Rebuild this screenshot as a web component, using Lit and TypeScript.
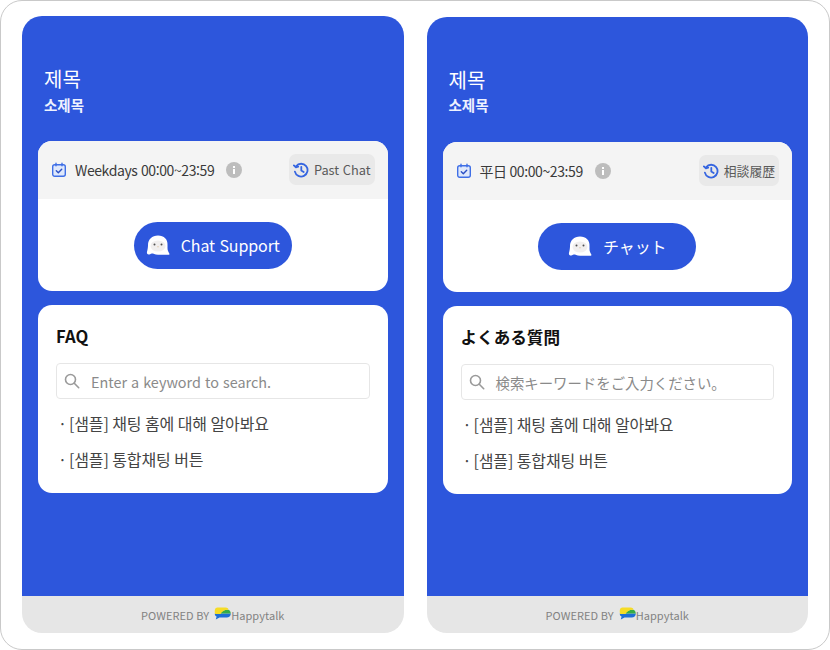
import { LitElement, html, css } from "lit";
import { customElement } from "lit/decorators.js";

const calendar = html`<svg class="cal" viewBox="0 0 16 16" width="16" height="16" fill="none" stroke="#3f6fe6" stroke-width="1.4" stroke-linecap="round" stroke-linejoin="round">
  <rect x="1.7" y="2.7" width="12.6" height="11.6" rx="2" fill="#dfe8fb"/>
  <path d="M5 1.2v2.6M11 1.2v2.6"/>
  <path d="M5.3 8.8l2 1.9 3.4-3.5" stroke="#2a4fc4"/>
</svg>`;
const info = html`<svg class="info" viewBox="0 0 16 16" width="16" height="16">
  <circle cx="8" cy="8" r="8" fill="#bdbdbd"/>
  <rect x="7" y="7" width="2" height="5" fill="#fff"/>
  <rect x="7" y="4" width="2" height="2" fill="#fff"/>
</svg>`;
const history = html`<svg viewBox="0 0 16 16" width="16" height="16" fill="none" stroke="#3565e0" stroke-width="1.8" stroke-linecap="round" stroke-linejoin="round">
  <path d="M3.1 4.2A6.4 6.4 0 1 1 1.9 9.6"/>
  <path d="M.9 3.4l2 1.9 2.3-.6"/>
  <path d="M8.3 4.8v3.6l2.4 1.6"/>
</svg>`;
const ghost = html`<svg viewBox="0 0 24 24" width="24" height="24">
  <path d="M12 2.500C6 2.500 2 6.500 2 12c0 2-.4 5-1 6.800-.5 1.600.6 3 2.200 2.700 1.500-.3 2.800-1.200 4.300-.8 1.500.8 3 1.100 4.500 1.100h10.500c.8 0 1.200-.8.800-1.400-.9-1.300-1.800-3-1.800-5.400V12C22 6.500 18 2.500 12 2.500z" fill="#fff"/>
  <ellipse cx="12" cy="13" rx="7.500" ry="5.500" fill="#f1efef"/>
  <circle cx="8.500" cy="11.500" r="1" fill="#4f4f4f"/>
  <circle cx="15.500" cy="11.500" r="1" fill="#4f4f4f"/>
  <path d="M11 13.500h2l-1 1.100z" fill="#d8b48a"/>
</svg>`;
const search = html`<svg viewBox="0 0 16 16" width="16" height="16" fill="none" stroke="#9a9a9a" stroke-width="1.6" stroke-linecap="round">
  <circle cx="6.500" cy="6.500" r="5"/><path d="M10.300 10.300l4.400 4.400"/>
</svg>`;
const logo = html`<svg class="logo" viewBox="0 0 17 13" width="17" height="13">
  <path d="M16.800 6.500c0 2.500-1.800 3.900-4 3.900H5.500L1.800 12.600l.8-3C1.200 8.800.6 7.600.8 6.500z" fill="#1f6fd6"/>
  <path d="M6 6.500c1.500-2.600 5-4.200 8.200-3.800 1.600.4 2.500 2 2.600 3.800z" fill="#35ad48"/>
  <path d="M3.400.4h8c2.200 0 3.200 1 3 2.300C11 2.300 8 4 6.600 7H1.200C.2 4 .8.400 3.400.4z" fill="#f6dc26"/>
</svg>`;

interface Copy {
  hours: string; past: string; chat: string; faq: string; placeholder: string; lang: string;
}
const EN: Copy = { hours: "Weekdays 00:00~23:59", past: "Past Chat", chat: "Chat Support", faq: "FAQ", placeholder: "Enter a keyword to search.", lang: "ko" };
const JA: Copy = { hours: "平日 00:00~23:59", past: "相談履歴", chat: "チャット", faq: "よくある質問", placeholder: "検索キーワードをご入力ください。", lang: "ja" };

@customElement("app-root")
export class AppRoot extends LitElement {
  static styles = css`
    :host {
      display: block;
      width: 830px;
      height: 650px;
      box-sizing: border-box;
      font-family: "Noto Sans CJK KR", "Noto Sans", sans-serif;
      background: #fff;
    }
    .frame {
      box-sizing: border-box;
      width: 830px;
      height: 650px;
      border: 1px solid #c9c9c9;
      border-radius: 22px;
      padding: 15px 21px 16px 21px;
      display: flex;
      gap: 23px;
      align-items: stretch;
      background: #fff;
    }
    .panel {
      flex: 1 1 0;
      min-width: 0;
      display: flex;
      flex-direction: column;
    }
    .panel.right {
      margin-top: 1px;
    }
    .main {
      flex: 1;
      background: #2d56dc;
      border-radius: 20px 20px 0 0;
      display: flex;
      flex-direction: column;
    }
    .head {
      padding: 48px 16px 0 22px;
      height: 77px;
      color: #fff;
      display: flex;
      flex-direction: column;
    }
    .title {
      font-size: 20px;
      line-height: 30px;
    }
    .sub {
      font-size: 14.5px;
      font-weight: 700;
      line-height: 21px;
      color: #eef2ff;
    }
    .right .sub {
      margin-top: -1px;
    }
    .body {
      flex: 1;
      padding: 0 16px;
      display: flex;
      flex-direction: column;
      gap: 14px;
    }
    .card {
      background: #fff;
      border-radius: 14px;
      overflow: hidden;
    }
    .bar {
      height: 57.5px;
      background: #f4f4f4;
      display: flex;
      align-items: center;
      padding: 0 13px;
      font-size: 14px;
      color: #3a3a3a;
      letter-spacing: -0.4px;
    }
    .cal { margin-right: 8px; }
    .info { margin-left: 12px; }
    .past {
      margin-left: auto;
      height: 31px;
      box-sizing: border-box;
      padding: 0 4px;
      border-radius: 7px;
      background: #e9e9e9;
      display: flex;
      align-items: center;
      gap: 5px;
      font-size: 12.8px;
      color: #5a5a5a;
      letter-spacing: 0;
      white-space: nowrap;
    }
    .action {
      height: 92.5px;
      box-sizing: border-box;
      padding-top: 1px;
      display: flex;
      align-items: center;
      justify-content: center;
    }
    .chat {
      height: 47px;
      width: 158px;
      box-sizing: border-box;
      border-radius: 24px;
      background: #2d56dc;
      color: #fff;
      font-size: 16px;
      letter-spacing: -0.1px;
      display: flex;
      align-items: center;
      justify-content: center;
      gap: 11px;
    }
    .faq {
      height: 188px;
      box-sizing: border-box;
      padding: 18px 18px 0;
    }
    .faq h2 {
      margin: 0;
      font-size: 16.6px;
      line-height: 26px;
      font-weight: 700;
      color: #111;
    }
    .search {
      margin-top: 14px;
      height: 36px;
      box-sizing: border-box;
      border: 1px solid #e6e6e6;
      border-radius: 4px;
      display: flex;
      align-items: center;
      padding-left: 7px;
      gap: 11px;
      font-size: 14.4px;
      color: #8a8a8a;
    }
    .search span { padding-top: 1px; }
    .list {
      margin: 6px 0 0;
      padding: 0 0 0 2px;
      list-style: none;
      font-size: 16px;
      color: #444;
      letter-spacing: -0.1px;
    }
    .list li {
      height: 36px;
      line-height: 36px;
      white-space: nowrap;
    }
    .dot { margin-right: 2px; }
    .foot {
      height: 37px;
      flex: none;
      background: #e6e6e6;
      border-radius: 0 0 20px 20px;
      display: flex;
      align-items: center;
      justify-content: center;
      font-size: 11px;
      letter-spacing: 0.05px;
      color: #828282;
      padding-top: 1px;
      box-sizing: border-box;
    }
    .foot .by { margin-right: 5px; }
    .logo { margin-top: -3px; }
  `;

  private panel(c: Copy, cls: string) {
    return html`
      <section class="panel ${cls}">
        <div class="main">
          <div class="head">
            <div class="title">제목</div>
            <div class="sub">소제목</div>
          </div>
          <div class="body">
            <div class="card">
              <div class="bar" lang=${c.lang}>
                ${calendar}<span>${c.hours}</span>${info}
                <div class="past">${history}<span>${c.past}</span></div>
              </div>
              <div class="action">
                <div class="chat" lang=${c.lang}>${ghost}<span>${c.chat}</span></div>
              </div>
            </div>
            <div class="card faq">
              <h2 lang=${c.lang}>${c.faq}</h2>
              <div class="search" lang=${c.lang}>${search}<span>${c.placeholder}</span></div>
              <ul class="list">
                <li><span class="dot">·</span>[샘플] 채팅 홈에 대해 알아봐요</li>
                <li><span class="dot">·</span>[샘플] 통합채팅 버튼</li>
              </ul>
            </div>
          </div>
        </div>
        <div class="foot">
          <span class="by">POWERED BY</span>${logo}<span>Happytalk</span>
        </div>
      </section>
    `;
  }

  render() {
    return html`<div class="frame">${this.panel(EN, "")}${this.panel(JA, "right")}</div>`;
  }
}
